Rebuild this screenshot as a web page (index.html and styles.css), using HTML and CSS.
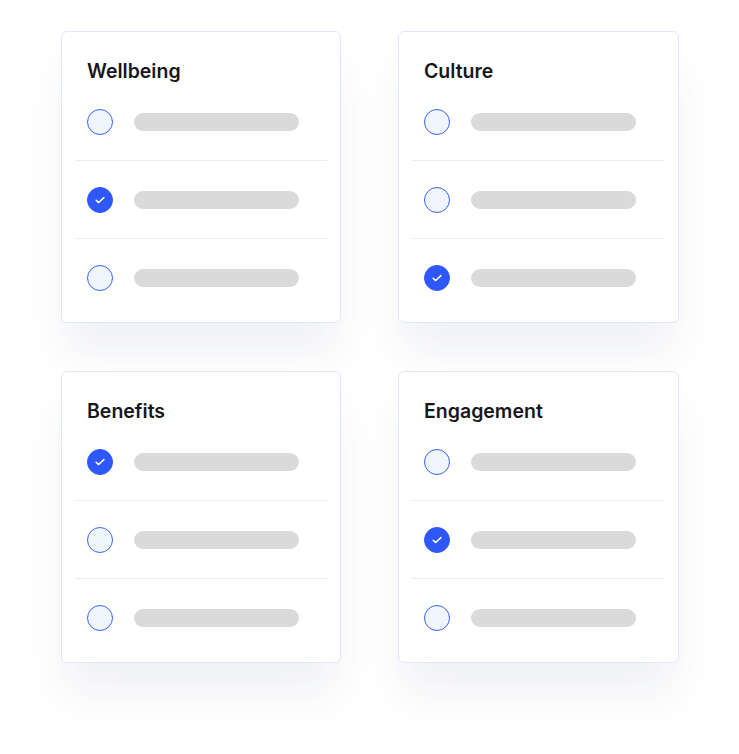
FILE: index.html
```html
<!DOCTYPE html>
<html lang="en">
<head>
    <meta charset="UTF-8">
    <meta name="viewport" content="width=device-width, initial-scale=1.0">
    <title>Survey Categories</title>
    <link rel="stylesheet" href="styles.css">
</head>
<body>
    <div class="grid">
        <div class="card">
            <h2>Wellbeing</h2>
            <ul class="items">
                <li><span class="box"></span><span class="bar"></span></li>
                <li><span class="box checked"><svg viewBox="0 0 26 26"><polyline points="8.8,13.2 11.6,15.8 17.2,10.4"/></svg></span><span class="bar"></span></li>
                <li><span class="box"></span><span class="bar"></span></li>
            </ul>
        </div>
        <div class="card">
            <h2>Culture</h2>
            <ul class="items">
                <li><span class="box"></span><span class="bar"></span></li>
                <li><span class="box"></span><span class="bar"></span></li>
                <li><span class="box checked"><svg viewBox="0 0 26 26"><polyline points="8.8,13.2 11.6,15.8 17.2,10.4"/></svg></span><span class="bar"></span></li>
            </ul>
        </div>
        <div class="card">
            <h2>Benefits</h2>
            <ul class="items">
                <li><span class="box checked"><svg viewBox="0 0 26 26"><polyline points="8.8,13.2 11.6,15.8 17.2,10.4"/></svg></span><span class="bar"></span></li>
                <li><span class="box"></span><span class="bar"></span></li>
                <li><span class="box"></span><span class="bar"></span></li>
            </ul>
        </div>
        <div class="card">
            <h2>Engagement</h2>
            <ul class="items">
                <li><span class="box"></span><span class="bar"></span></li>
                <li><span class="box checked"><svg viewBox="0 0 26 26"><polyline points="8.8,13.2 11.6,15.8 17.2,10.4"/></svg></span><span class="bar"></span></li>
                <li><span class="box"></span><span class="bar"></span></li>
            </ul>
        </div>
    </div>
</body>
</html>
```
FILE: styles.css
```css
body { margin: 0; background: #fff; font-family: Inter, "Noto Sans", sans-serif; }
.grid {
    display: grid;
    grid-template-columns: 280px 281px;
    column-gap: 57px;
    row-gap: 48px;
    padding: 31px 0 90px 61px;
}
.card {
    background: #fff;
    border: 1px solid #e0e7fd;
    border-radius: 6px;
    padding: 27px 0 6px;
    box-shadow: 0 34px 44px -4px rgba(40, 60, 110, 0.07);
}
.card h2 {
    margin: 0;
    padding: 0 25px;
    font-size: 19.5px;
    line-height: 24px;
    font-weight: 600;
    color: #16171d;
}
.items { list-style: none; margin: 0; padding: 0; }
.items li {
    display: flex;
    align-items: center;
    height: 77px;
    margin: 0 13px;
    padding: 0 12px;
    border-bottom: 1px solid #ececec;
}
.items li:last-child { border-bottom: none; }
.box {
    width: 26px;
    height: 26px;
    box-sizing: border-box;
    border-radius: 50%;
    border: 1px solid #3a62f6;
    background: #eff6ff;
    flex-shrink: 0;
}
.box.checked { background: #2e58fb; border-color: #2e58fb; }
.box svg { display: block; width: 24px; height: 24px; }
.box polyline { fill: none; stroke: #fff; stroke-width: 1.6; stroke-linecap: round; stroke-linejoin: round; }
.bar {
    width: 165px;
    height: 18px;
    margin-left: 21px;
    border-radius: 9px;
    background: #dadada;
}
```
